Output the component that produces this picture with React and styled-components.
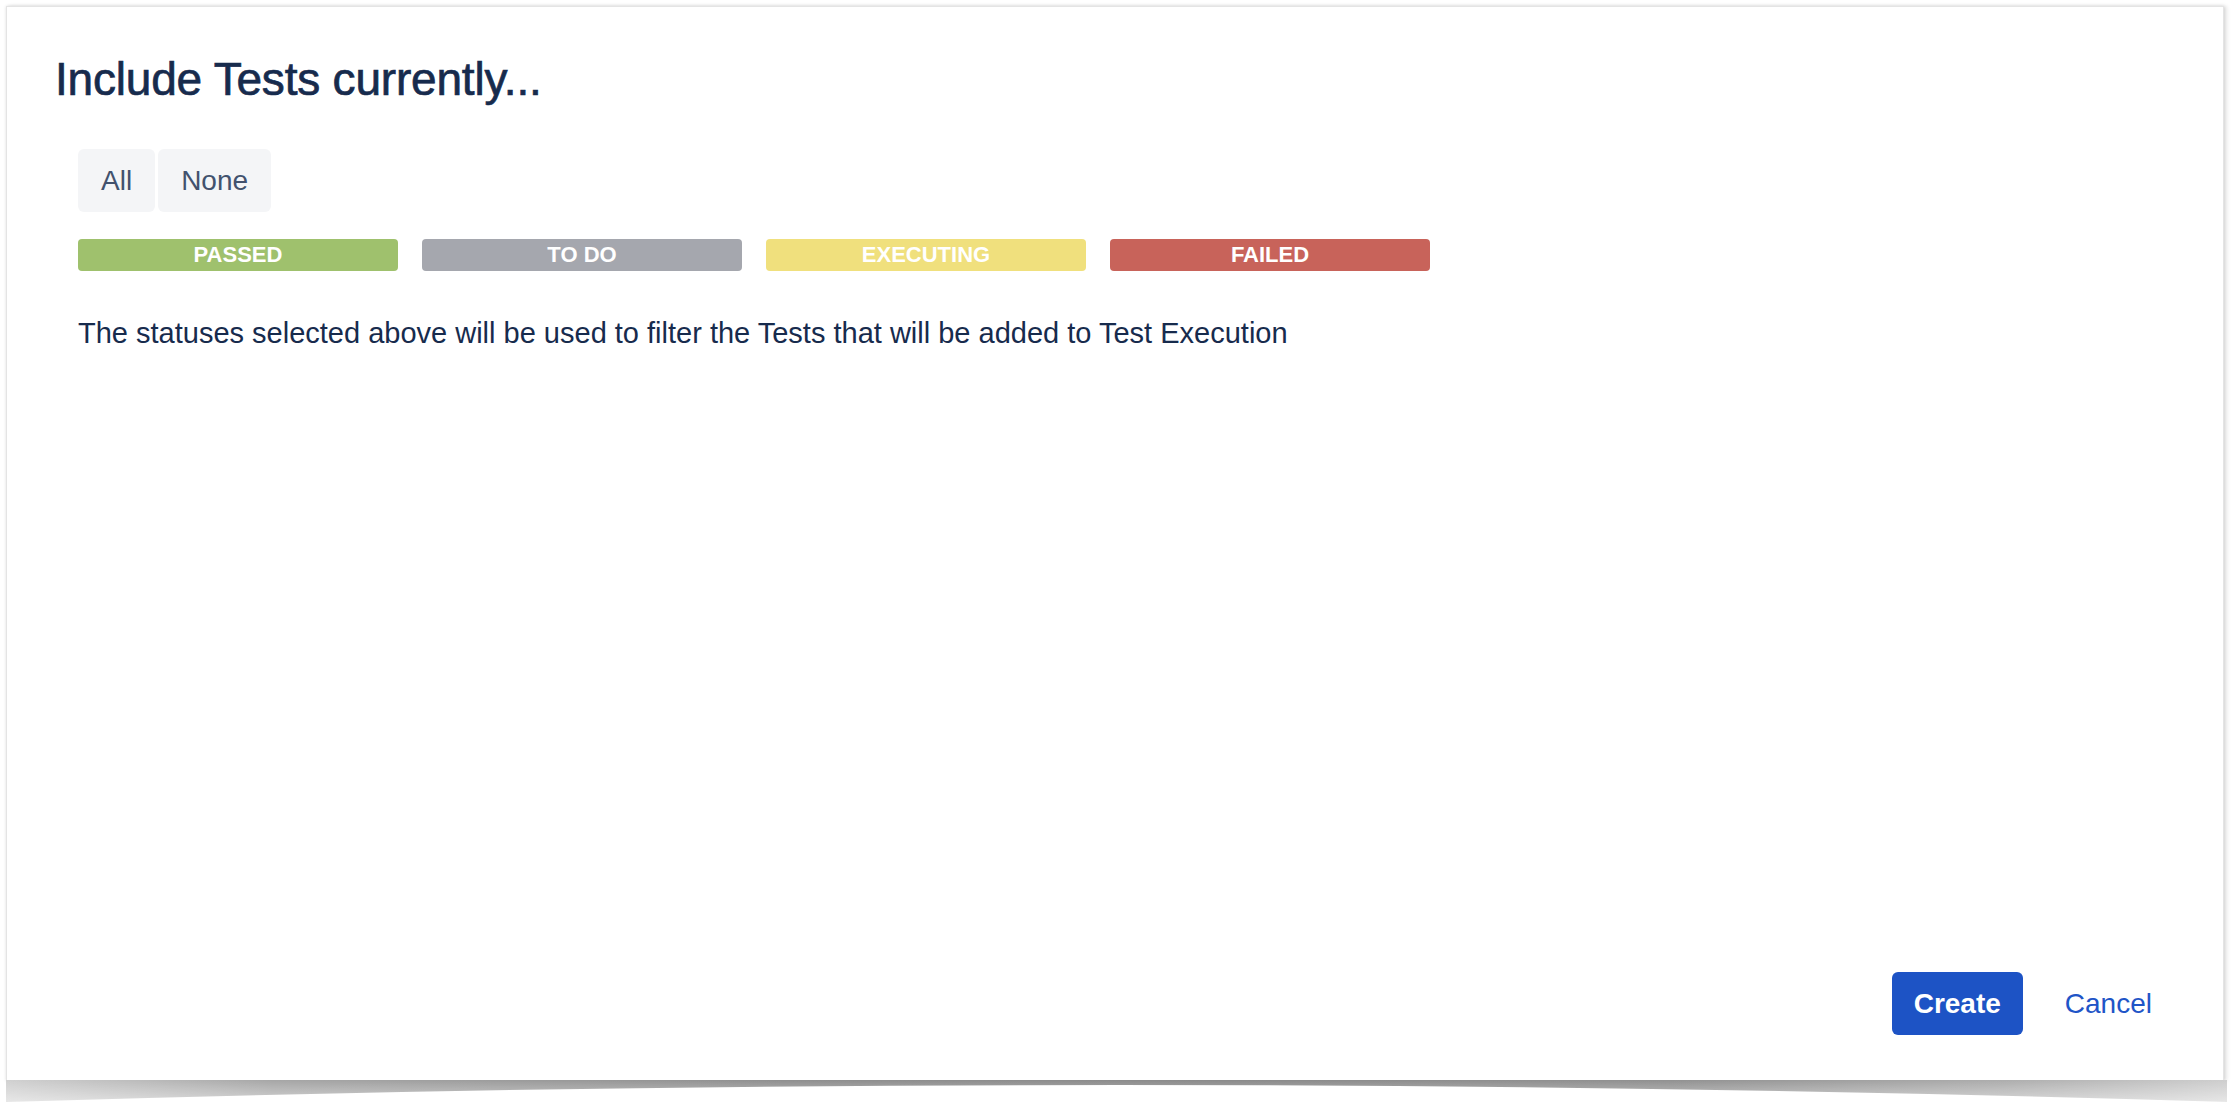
import React from "react";
import styled, { createGlobalStyle } from "styled-components";

const Global = createGlobalStyle`
  html, body { margin: 0; padding: 0; background: #ffffff; }
  body { font-family: "Liberation Sans", Arial, sans-serif; }
  * { box-sizing: border-box; }
`;

const Page = styled.div`
  width: 2232px;
  height: 1109px;
  padding: 6px 8px 0 6px;
  background: #ffffff;
  overflow: hidden;
`;

const Card = styled.section`
  position: relative;
  width: 2218px;
  height: 1075px;
  background: #ffffff;
  border: 1px solid #e4e4e4;
  box-shadow: 0 0 3px rgba(0, 0, 0, 0.12), 3px 0 4px rgba(0, 0, 0, 0.1);
  display: flex;
  flex-direction: column;

  &::after {
    content: "";
    position: absolute;
    left: -1px;
    right: -4px;
    top: 100%;
    height: 22px;
    background:
      linear-gradient(to bottom, rgba(255,255,255,0) 0%, rgba(255,255,255,0.5) 100%),
      linear-gradient(to right, #d0d0d0 0%, #a6a6a6 12%, #8f8f8f 35%, #8a8a8a 55%, #919191 75%, #adadad 90%, #cecece 100%);
    clip-path: path("M0 0 H2223 V22 Q1111 -12 0 22 Z");
    filter: blur(0.6px);
  }
`;

const Header = styled.header`
  padding: 44px 48px 0 48px;
`;

const Title = styled.h1`
  margin: 0;
  font-family: "Liberation Sans", Arial, sans-serif;
  font-size: 46px;
  line-height: 56px;
  font-weight: 400;
  color: #172b4d;
  -webkit-text-stroke: 0.7px #172b4d;
  letter-spacing: -0.2px;
`;

const Body = styled.div`
  flex: 1;
  padding: 42px 71px 0 71px;
  display: flex;
  flex-direction: column;
  align-items: flex-start;
`;

const ButtonGroup = styled.div`
  display: flex;
  gap: 3px;
`;

const GroupButton = styled.button`
  height: 63px;
  padding: 0 23px;
  border: none;
  border-radius: 6px;
  background: #f4f5f7;
  color: #42526e;
  font-family: "Liberation Sans", Arial, sans-serif;
  font-size: 28px;
  cursor: pointer;
`;

const StatusRow = styled.div`
  margin-top: 27px;
  display: flex;
  gap: 24px;
`;

const Lozenge = styled.div`
  width: 320px;
  height: 32px;
  border-radius: 4px;
  background: ${(p) => p.$color};
  color: #ffffff;
  font-family: "Liberation Sans", Arial, sans-serif;
  font-weight: 700;
  font-size: 22px;
  line-height: 32px;
  text-align: center;
  text-transform: uppercase;
`;

const HelpText = styled.p`
  margin: 42px 0 0 0;
  font-family: "Liberation Sans", Arial, sans-serif;
  font-size: 29px;
  line-height: 40px;
  color: #172b4d;
`;

const Footer = styled.footer`
  display: flex;
  justify-content: flex-end;
  align-items: center;
  gap: 20px;
  padding: 0 49px 45px 0;
`;

const PrimaryButton = styled.button`
  height: 63px;
  padding: 0 22px;
  border: none;
  border-radius: 6px;
  background: #1d53c5;
  color: #ffffff;
  font-family: "Liberation Sans", Arial, sans-serif;
  font-weight: 700;
  font-size: 28px;
  cursor: pointer;
`;

const LinkButton = styled.button`
  height: 63px;
  padding: 0 22px;
  border: none;
  background: transparent;
  color: #1f55c7;
  font-family: "Liberation Sans", Arial, sans-serif;
  font-size: 28px;
  cursor: pointer;
`;

const statuses = [
  { label: "Passed", color: "#9fc16d" },
  { label: "To Do", color: "#a5a7ae" },
  { label: "Executing", color: "#f0e07d" },
  { label: "Failed", color: "#c8635a" },
];

export default function App() {
  return (
    <>
      <Global />
      <Page>
        <Card>
          <Header>
            <Title>Include Tests currently...</Title>
          </Header>
          <Body>
            <ButtonGroup>
              <GroupButton>All</GroupButton>
              <GroupButton>None</GroupButton>
            </ButtonGroup>
            <StatusRow>
              {statuses.map((s) => (
                <Lozenge key={s.label} $color={s.color}>
                  {s.label}
                </Lozenge>
              ))}
            </StatusRow>
            <HelpText>
              The statuses selected above will be used to filter the Tests that will be added to Test Execution
            </HelpText>
          </Body>
          <Footer>
            <PrimaryButton>Create</PrimaryButton>
            <LinkButton>Cancel</LinkButton>
          </Footer>
        </Card>
      </Page>
    </>
  );
}
